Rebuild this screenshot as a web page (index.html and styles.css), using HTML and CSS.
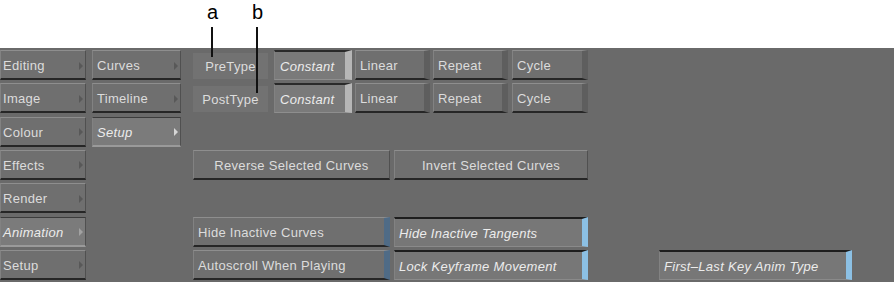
FILE: index.html
```html
<!DOCTYPE html>
<html lang="en">
<head>
  <meta charset="UTF-8" />
  <title>Animation Setup</title>
  <link rel="stylesheet" href="styles.css">
</head>
<body>
  <div class="page">
    <div class="callouts">
      <span class="callout ca">a</span>
      <span class="lead la"></span>
      <span class="callout cb">b</span>
      <span class="lead lb"></span>
    </div>

    <div class="panel">
      <div class="menu main-menu">
        <div class="btn nav">Editing<i class="arrow"></i></div>
        <div class="btn nav">Image<i class="arrow"></i></div>
        <div class="btn nav">Colour<i class="arrow"></i></div>
        <div class="btn nav">Effects<i class="arrow"></i></div>
        <div class="btn nav">Render<i class="arrow"></i></div>
        <div class="btn nav active">Animation<i class="arrow"></i></div>
        <div class="btn nav">Setup<i class="arrow"></i></div>
      </div>

      <div class="menu sub-menu">
        <div class="btn nav">Curves<i class="arrow"></i></div>
        <div class="btn nav">Timeline<i class="arrow"></i></div>
        <div class="btn nav active">Setup<i class="arrow"></i></div>
      </div>

      <div class="setup">
        <div class="row r1">
          <span class="label">PreType</span>
          <div class="btn radio on w78">Constant</div>
          <div class="btn radio w75">Linear</div>
          <div class="btn radio w75">Repeat</div>
          <div class="btn radio w76 gap-l">Cycle</div>
        </div>
        <div class="row r2">
          <span class="label">PostType</span>
          <div class="btn radio on w78">Constant</div>
          <div class="btn radio w75">Linear</div>
          <div class="btn radio w75">Repeat</div>
          <div class="btn radio w76 gap-l">Cycle</div>
        </div>
        <div class="row r4">
          <div class="btn wide centered">Reverse Selected Curves</div>
          <div class="btn wide2 centered gap-l">Invert Selected Curves</div>
        </div>
        <div class="row r6">
          <div class="btn toggle wide">Hide Inactive Curves</div>
          <div class="btn toggle on wide2 gap-l">Hide Inactive Tangents</div>
        </div>
        <div class="row r7">
          <div class="btn toggle wide">Autoscroll When Playing</div>
          <div class="btn toggle on wide2 gap-l">Lock Keyframe Movement</div>
          <div class="btn toggle on wide3 far">First–Last Key Anim Type</div>
        </div>
      </div>
    </div>
  </div>
</body>
</html>
```

FILE: styles.css
```css
body {
  margin: 0;
  background: #ffffff;
  font-family: 'Liberation Sans', Arial, sans-serif;
}
.page {
  position: relative;
  width: 894px;
  height: 282px;
  overflow: hidden;
}
.callouts {
  height: 48px;
}
.callout {
  position: absolute;
  top: 1px;
  font-size: 20px;
  line-height: normal;
  color: #000;
  z-index: 3;
}
.ca { left: 207px; }
.cb { left: 252px; }
.lead {
  position: absolute;
  top: 27px;
  width: 2px;
  background: #111;
  z-index: 3;
}
.la { left: 211px; height: 30px; }
.lb { left: 256px; height: 66px; }

.panel {
  display: flex;
  background: #6a6a6a;
  height: 234px;
  padding-top: 2px;
  box-sizing: border-box;
}
.menu {
  display: flex;
  flex-direction: column;
  gap: 3.33px;
}
.main-menu { width: 86px; }
.sub-menu { width: 89px; margin-left: 6px; }

.btn {
  box-sizing: border-box;
  height: 30px;
  display: flex;
  align-items: center;
  position: relative;
  padding-left: 4px;
  padding-top: 2px;
  background: #6f6f6f;
  border-top: 1px solid #8e8e8e;
  border-left: 1px solid #828282;
  border-right: 1px solid #505050;
  border-bottom: 2px solid #262626;
  color: #dcdcdc;
  font-size: 13px;
  letter-spacing: 0.3px;
  white-space: nowrap;
}
.main-menu .btn { padding-left: 2px; }
.nav .arrow {
  margin-left: auto;
  margin-right: 2px;
  width: 0;
  height: 0;
  border-left: 4px solid #585858;
  border-top: 4px solid transparent;
  border-bottom: 4px solid transparent;
}
.nav.active {
  background: #7b7b7b;
  border-top: 1px solid #3c3c3c;
  border-bottom: 2px solid #9a9a9a;
  font-style: italic;
  color: #ececec;
}
.nav.active .arrow { border-left-color: #d6d6d6; }
.main-menu .nav.active .arrow { border-left-color: #a2a2a2; }

.setup {
  margin-left: 12px;
  display: grid;
  grid-template-rows: repeat(7, 30px);
  row-gap: 3.33px;
}
.row {
  display: flex;
  gap: 3px;
}
.r1 { grid-row: 1; }
.r2 { grid-row: 2; }
.r4 { grid-row: 4; }
.r6 { grid-row: 6; }
.r7 { grid-row: 7; }

.label {
  box-sizing: border-box;
  width: 75px;
  height: 26px;
  margin: 3px 3px 0 0;
  padding-top: 1px;
  background: #727272;
  color: #dcdcdc;
  font-size: 13px;
  letter-spacing: 0.3px;
  display: flex;
  align-items: center;
  justify-content: center;
}
.w75 { width: 75px; }
.w76 { width: 76px; }
.w78 { width: 78px; }
.gap-l { margin-left: 1px; }
.wide { width: 197px; }
.wide2 { width: 194px; }
.wide3 { width: 193px; }
.far { margin-left: 68px; }
.centered {
  justify-content: center;
  padding-left: 0;
}

.radio { border-right: 6px solid #5e5e5e; }
.radio.on {
  background: #7a7a7a;
  border-top: 2px solid #2a2a2a;
  border-bottom: 1px solid #8e8e8e;
  border-right: 7px solid #b6b6b6;
  font-style: italic;
  padding-left: 5px;
  color: #ececec;
}

.toggle { border-right: 6px solid #4f6b86; }
.toggle.on {
  background: #777777;
  border-top: 2px solid #1e1e1e;
  border-bottom: 1px solid #8a8a8a;
  border-right: 6px solid #8cc0e4;
  font-style: italic;
  color: #ececec;
}
```
